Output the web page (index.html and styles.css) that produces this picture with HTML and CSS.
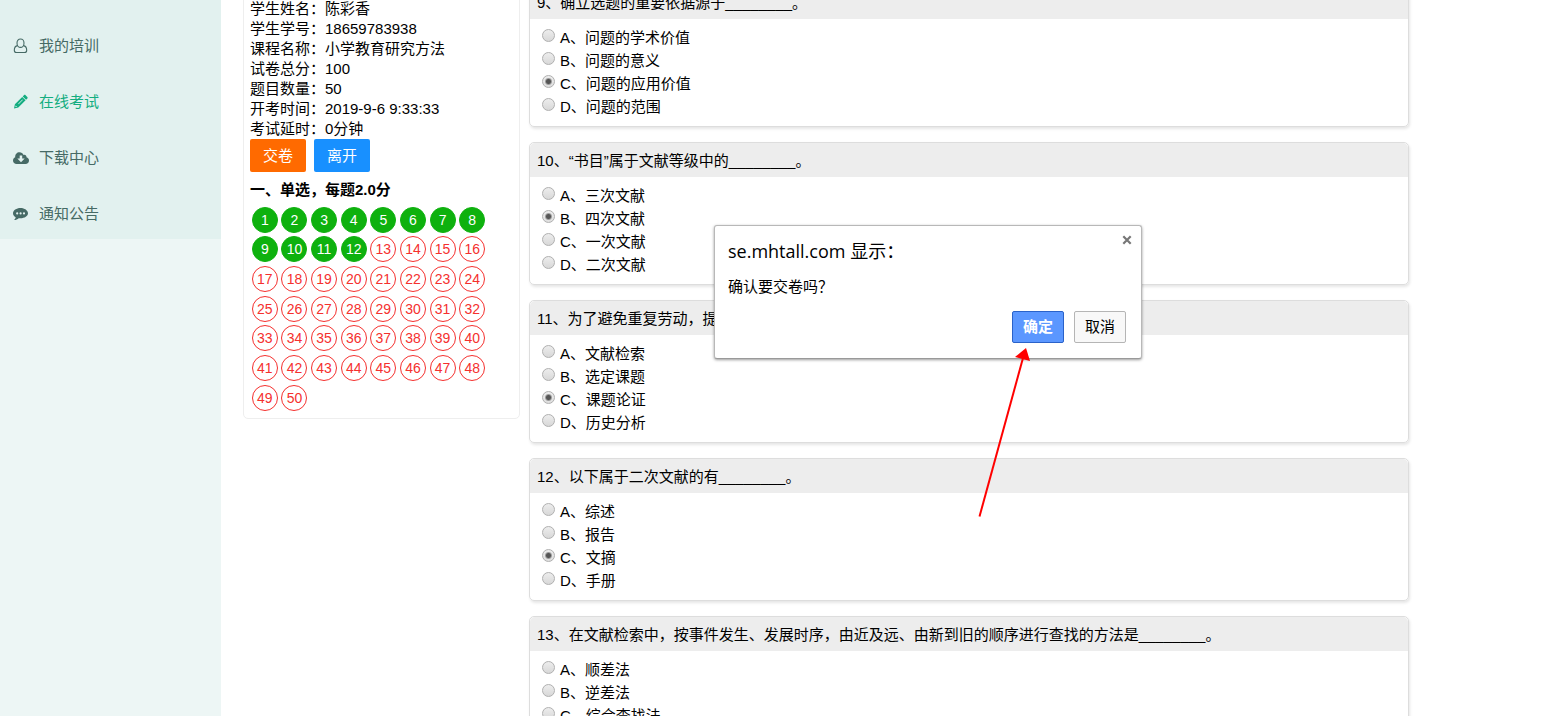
FILE: index.html
```html
<!DOCTYPE html>
<html lang="zh-CN">
<head>
<meta charset="utf-8">
<meta name="viewport" content="width=device-width, initial-scale=1">
<title>在线考试</title>
<link rel="stylesheet" href="styles.css">
</head>
<body>
<div class="layout">
  <aside class="sidebar">
    <nav class="menu">
      <a class="menu-item" href="#"><svg class="icon" viewBox="0 0 16 16" fill="none" stroke="currentColor" stroke-width="1.1"><path d="M7.500 1C5.400 1 4 2.500 4 4.900s1.500 4.500 3.500 4.500S11 7.300 11 4.900 9.600 1 7.500 1z"/><path d="M4.600 7.600C2.300 8 1.300 9.600 1.300 12.200c0 1.500.9 2.300 2.200 2.300h8c1.300 0 2.200-.8 2.200-2.300 0-2.600-1-4.200-3.300-4.600"/></svg>我的培训</a>
      <a class="menu-item active" href="#"><svg class="icon" viewBox="0 0 16 16" fill="currentColor"><path fill-rule="evenodd" d="M1 14.500l.9-4.300L9.200 2.900l3.400 3.400-7.300 7.300zM2.700 11.400l-.3 1.700 1.700-.3zM5.200 9.800l.4.400 4.200-4.200-.4-.4z"/><path d="M9.700 2.400l1.200-1.200c.5-.5 1.200-.5 1.700 0l1.700 1.700c.5.5.5 1.200 0 1.700l-1.200 1.200z"/></svg>在线考试</a>
      <a class="menu-item" href="#"><svg class="icon" viewBox="0 0 16 16" fill="currentColor"><path fill-rule="evenodd" d="M3.600 14C1.600 14 0 12.500 0 10.500c0-1.500.9-2.700 2.200-3.200C2 4.300 4 2.300 6.500 2.300c1.800 0 3.300 1 4 2.600 1.600-.6 3.200.5 3 2.400 1.500.4 2.500 1.600 2.500 3.200 0 2-1.500 3.500-3.500 3.500zM6.700 5.500v3H4.300L8 12.200l3.700-3.700H9.200v-3z"/></svg>下载中心</a>
      <a class="menu-item" href="#"><svg class="icon" viewBox="0 0 16 16" fill="currentColor"><path fill-rule="evenodd" d="M7.500 2C3.400 2 0 4.300 0 7.300c0 1.600 1 3.100 2.700 4-.3 1.300-1 2.100-1.700 2.800 2.100-.1 3.600-.8 4.700-1.900.6.100 1.200.1 1.800.1 4.100 0 7.500-2.200 7.500-5S11.600 2 7.500 2zM4.200 6.300a1.100 1.100 0 110 2.200 1.100 1.100 0 010-2.200zm3.400 0a1.100 1.100 0 110 2.200 1.100 1.100 0 010-2.200zm3.400 0a1.100 1.100 0 110 2.200 1.100 1.100 0 010-2.200z"/></svg>通知公告</a>
    </nav>
  </aside>

  <main class="content">
    <section class="panel">
      <ul class="info">
        <li>学生姓名：陈彩香</li>
        <li>学生学号：18659783938</li>
        <li>课程名称：小学教育研究方法</li>
        <li>试卷总分：100</li>
        <li>题目数量：50</li>
        <li>开考时间：2019-9-6 9:33:33</li>
        <li>考试延时：0分钟</li>
      </ul>
      <div class="actions">
        <button class="btn btn-submit" type="button">交卷</button>
        <button class="btn btn-leave" type="button">离开</button>
      </div>
      <h2 class="group-title">一、单选，每题2.0分</h2>
      <ol class="numbers">
        <li><a class="done" href="#">1</a></li><li><a class="done" href="#">2</a></li><li><a class="done" href="#">3</a></li><li><a class="done" href="#">4</a></li><li><a class="done" href="#">5</a></li><li><a class="done" href="#">6</a></li><li><a class="done" href="#">7</a></li><li><a class="done" href="#">8</a></li>
        <li><a class="done" href="#">9</a></li><li><a class="done" href="#">10</a></li><li><a class="done" href="#">11</a></li><li><a class="done" href="#">12</a></li><li><a href="#">13</a></li><li><a href="#">14</a></li><li><a href="#">15</a></li><li><a href="#">16</a></li>
        <li><a href="#">17</a></li><li><a href="#">18</a></li><li><a href="#">19</a></li><li><a href="#">20</a></li><li><a href="#">21</a></li><li><a href="#">22</a></li><li><a href="#">23</a></li><li><a href="#">24</a></li>
        <li><a href="#">25</a></li><li><a href="#">26</a></li><li><a href="#">27</a></li><li><a href="#">28</a></li><li><a href="#">29</a></li><li><a href="#">30</a></li><li><a href="#">31</a></li><li><a href="#">32</a></li>
        <li><a href="#">33</a></li><li><a href="#">34</a></li><li><a href="#">35</a></li><li><a href="#">36</a></li><li><a href="#">37</a></li><li><a href="#">38</a></li><li><a href="#">39</a></li><li><a href="#">40</a></li>
        <li><a href="#">41</a></li><li><a href="#">42</a></li><li><a href="#">43</a></li><li><a href="#">44</a></li><li><a href="#">45</a></li><li><a href="#">46</a></li><li><a href="#">47</a></li><li><a href="#">48</a></li>
        <li><a href="#">49</a></li><li><a href="#">50</a></li>
      </ol>
    </section>

    <form class="questions">
      <fieldset class="card">
        <div class="question">9、确立选题的重要依据源于________。</div>
        <div class="options">
          <label><input type="radio" name="q9">A、问题的学术价值</label>
          <label><input type="radio" name="q9">B、问题的意义</label>
          <label><input type="radio" name="q9" checked>C、问题的应用价值</label>
          <label><input type="radio" name="q9">D、问题的范围</label>
        </div>
      </fieldset>
      <fieldset class="card">
        <div class="question">10、“书目”属于文献等级中的________。</div>
        <div class="options">
          <label><input type="radio" name="q10">A、三次文献</label>
          <label><input type="radio" name="q10" checked>B、四次文献</label>
          <label><input type="radio" name="q10">C、一次文献</label>
          <label><input type="radio" name="q10">D、二次文献</label>
        </div>
      </fieldset>
      <fieldset class="card">
        <div class="question">11、为了避免重复劳动，提</div>
        <div class="options">
          <label><input type="radio" name="q11">A、文献检索</label>
          <label><input type="radio" name="q11">B、选定课题</label>
          <label><input type="radio" name="q11" checked>C、课题论证</label>
          <label><input type="radio" name="q11">D、历史分析</label>
        </div>
      </fieldset>
      <fieldset class="card">
        <div class="question">12、以下属于二次文献的有________。</div>
        <div class="options">
          <label><input type="radio" name="q12">A、综述</label>
          <label><input type="radio" name="q12">B、报告</label>
          <label><input type="radio" name="q12" checked>C、文摘</label>
          <label><input type="radio" name="q12">D、手册</label>
        </div>
      </fieldset>
      <fieldset class="card">
        <div class="question">13、在文献检索中，按事件发生、发展时序，由近及远、由新到旧的顺序进行查找的方法是________。</div>
        <div class="options">
          <label><input type="radio" name="q13">A、顺差法</label>
          <label><input type="radio" name="q13">B、逆差法</label>
          <label><input type="radio" name="q13">C、综合查找法</label>
        </div>
      </fieldset>
    </form>
  </main>
</div>

<dialog class="confirm" open aria-labelledby="confirm-title">
  <button class="close" type="button" aria-label="关闭"><svg viewBox="0 0 10 10" stroke="currentColor" stroke-width="2.200"><path d="M1.300 1.300l7.400 7.400M8.700 1.300L1.300 8.700"/></svg></button>
  <h1 class="confirm-title" id="confirm-title">se.mhtall.com 显示：</h1>
  <p class="confirm-text">确认要交卷吗？</p>
  <div class="confirm-actions">
    <button class="dialog-btn primary" type="button">确定</button>
    <button class="dialog-btn" type="button">取消</button>
  </div>
</dialog>

<svg class="arrow" viewBox="0 0 60 180"><path d="M9.500 176.500L53 18" stroke="#f00" stroke-width="2" fill="none"/><path d="M56 8l4 13-15-4z" fill="#f00"/></svg>
</body>
</html>
```
FILE: styles.css
```css
* {
  box-sizing: border-box;
}

body {
  margin: 0;
  height: 100vh;
  overflow: hidden;
  background: #fff;
  color: #000;
  font: 15px/20px "Liberation Sans", "Noto Sans CJK SC", sans-serif;
}

a {
  color: inherit;
  text-decoration: none;
}

ul,
ol {
  margin: 0;
  padding: 0;
  list-style: none;
}

.layout {
  display: flex;
  min-height: 100vh;
}

.sidebar {
  flex: none;
  width: 221px;
  background: #edf6f5;
}

.menu {
  display: flex;
  flex-direction: column;
  gap: 6px;
  padding: 21px 0 0;
  background: #e2f1ef;
}

.menu-item {
  display: flex;
  align-items: center;
  gap: 10px;
  height: 50px;
  padding-left: 13px;
  color: #466a65;
}

.menu-item.active {
  color: #13ad80;
}

.icon {
  width: 16px;
  height: 16px;
}

.content {
  flex: 1;
  min-width: 0;
  display: flex;
  align-items: flex-start;
  gap: 9px;
  margin-top: -16px;
  padding: 0 143px 0 22px;
}

.panel {
  flex: none;
  width: 277px;
  padding: 14px 6px 6px;
  border: 1px solid #eee;
  border-radius: 5px;
}

.actions {
  display: flex;
  gap: 8px;
}

.btn {
  height: 33px;
  padding: 0 13px;
  border: 0;
  border-radius: 2px;
  color: #fff;
  font: inherit;
}

.btn-submit {
  background: #ff6a00;
}

.btn-leave {
  background: #1890ff;
}

.group-title {
  margin: 8px 0 5px;
  font-size: 15px;
  line-height: 20px;
}

.numbers {
  display: grid;
  grid-template-columns: repeat(8, 1fr);
  width: 237px;
}

.numbers li {
  display: flex;
  align-items: center;
  justify-content: center;
  aspect-ratio: 1;
}

.numbers a {
  width: 26px;
  height: 26px;
  border: 1px solid #f5302e;
  border-radius: 50%;
  color: #f5302e;
  font-size: 14px;
  line-height: 24px;
  text-align: center;
}

.numbers .done {
  border-color: #0eb10e;
  background: #0eb10e;
  color: #fff;
}

.questions {
  flex: 1;
  min-width: 0;
  display: flex;
  flex-direction: column;
  gap: 15px;
}

.card {
  min-width: 0;
  margin: 0;
  padding: 0;
  overflow: hidden;
  border: 1px solid #ddd;
  border-radius: 5px;
  box-shadow: 1px 2px 3px rgba(0, 0, 0, 0.1);
}

.question {
  padding: 8px 7px 6px;
  background: #ededed;
}

.options {
  padding: 7px 12px 8px;
}

.options label {
  display: flex;
  align-items: center;
  gap: 5px;
  line-height: 23px;
}

.options input {
  appearance: none;
  width: 13px;
  height: 13px;
  margin: 0 0 4px;
  border: 1px solid #b0b0b0;
  border-radius: 50%;
  background: linear-gradient(#ededed, #d8d8d8);
}

.options input:checked {
  background: radial-gradient(circle, #555 0 2px, transparent 4px), linear-gradient(#ededed, #dedede);
}

.confirm {
  position: absolute;
  top: 225px;
  left: 714px;
  width: 428px;
  margin: 0;
  padding: 13px 15px 15px 13px;
  border: 1px solid #b8b8b8;
  border-bottom-color: #999;
  border-radius: 3px;
  background: #fff;
  color: #000;
  box-shadow: 0 1px 3px rgba(0, 0, 0, 0.4);
}

.close {
  position: absolute;
  top: 9px;
  right: 9px;
  display: flex;
  padding: 0;
  border: 0;
  background: none;
  color: #777;
}

.close svg {
  width: 10px;
  height: 10px;
}

.confirm-title {
  margin: 0;
  font: 18px/24px "Open Sans", "Noto Sans CJK SC", sans-serif;
}

.confirm-text {
  margin: 14px 0;
}

.confirm-actions {
  display: flex;
  justify-content: flex-end;
  gap: 10px;
}

.dialog-btn {
  width: 52px;
  height: 32px;
  padding: 0;
  border: 1px solid #b5b5b5;
  border-radius: 2px;
  background: #f8f8f8;
  color: #000;
  font: inherit;
}

.dialog-btn.primary {
  border-color: #2a62c9;
  background: #5b97ff;
  color: #fff;
  font-weight: bold;
}

.arrow {
  position: absolute;
  top: 340px;
  left: 970px;
  width: 60px;
  height: 180px;
}
```
